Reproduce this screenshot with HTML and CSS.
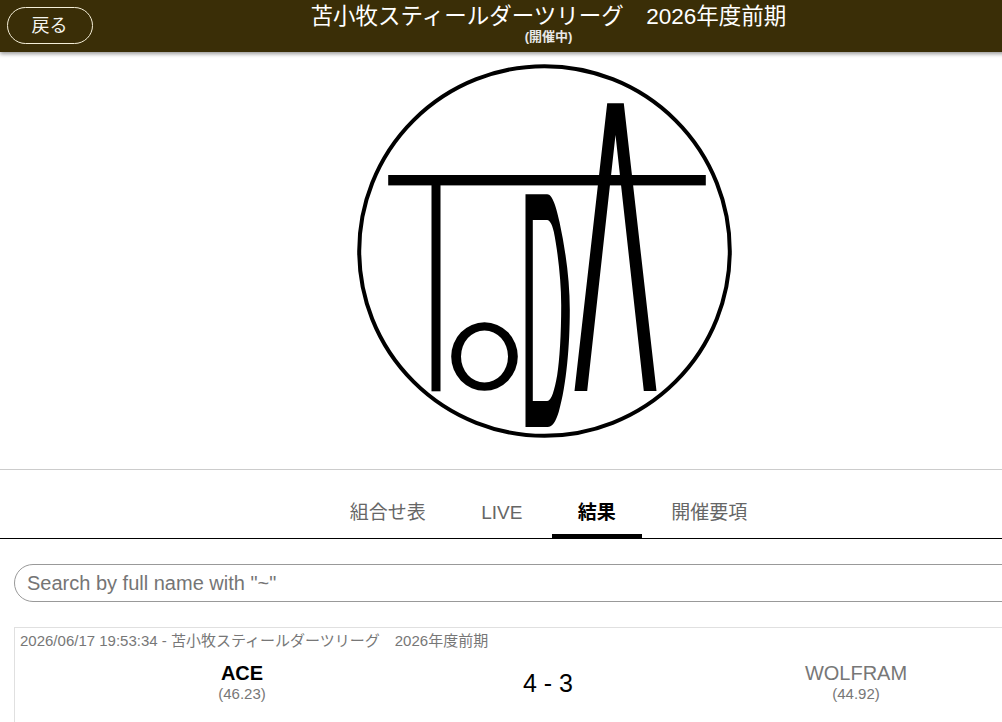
FILE: index.html
```html
<!DOCTYPE html>
<html lang="ja">
<head>
    <meta charset="UTF-8">
    <meta name="viewport" content="width=device-width, initial-scale=1.0">
    <title>苫小牧スティールダーツリーグ 2026年度前期</title>
    <link rel="stylesheet" href="styles.css">
</head>
<body>
    <div class="page">
        <header class="top-bar">
            <a class="back-btn">戻る</a>
            <div class="top-title">
                <div class="league-name">苫小牧スティールダーツリーグ　2026年度前期</div>
                <div class="league-state">(開催中)</div>
            </div>
        </header>

        <div class="logo-area">
            <svg class="logo" viewBox="338.5 52 420 417" width="420" height="417" role="img" aria-label="TODA">
                <ellipse cx="544" cy="251" rx="185.3" ry="184.8" fill="none" stroke="#000" stroke-width="4"/>
                <rect x="387.7" y="175" width="317.6" height="10.4"/>
                <rect x="431" y="185" width="9" height="206.3"/>
                <path fill-rule="evenodd" d="M450.7 356.5a33.3 34.2 0 1 0 66.6 0a33.3 34.2 0 1 0-66.6 0ZM460.5 356.5a23.5 26 0 1 1 47 0a23.5 26 0 1 1-47 0Z"/>
                <path fill-rule="evenodd" d="M525 194.3H546.7C552 194.3 556 208 559 222C565 250 569.3 280 569.3 310C569.3 345 566 385 558.3 411.7C555.5 421 552 427 547 427H525ZM532.3 220V401H546.7C551 401 554 390 556.7 375C559 360 560.7 335 560.7 305C560.7 280 557 250 553.3 231.7C551.5 224 549 220 546.7 220Z"/>
                <path fill-rule="evenodd" d="M606.7 103.3H623.3L656 391H643.3L615 135L586.7 391H574Z"/>
            </svg>
        </div>

        <nav class="tabs">
            <a class="tab">組合せ表</a>
            <a class="tab">LIVE</a>
            <a class="tab active">結果</a>
            <a class="tab">開催要項</a>
        </nav>

        <div class="search-wrap">
            <input class="search-input" type="text" placeholder="Search by full name with &quot;~&quot;">
        </div>

        <div class="match-card">
            <div class="match-date">2026/06/17 19:53:34 - 苫小牧スティールダーツリーグ　2026年度前期</div>
            <div class="match-row">
                <div class="team winner">
                    <div class="team-name">ACE</div>
                    <div class="team-avg">(46.23)</div>
                </div>
                <div class="score">4 - 3</div>
                <div class="team">
                    <div class="team-name">WOLFRAM</div>
                    <div class="team-avg">(44.92)</div>
                </div>
            </div>
        </div>
    </div>
</body>
</html>
```

FILE: styles.css
```css
html, body {
    margin: 0;
    padding: 0;
    height: 722px;
    overflow: hidden;
    background-color: white;
}
body {
    font-family: 'Liberation Sans', 'Noto Sans CJK JP', sans-serif;
    color: #000;
}
.page {
    width: 1097px;
}
.top-bar {
    display: grid;
    grid-template-columns: 100px 1fr 100px;
    height: 52px;
    background-color: #3a2e07;
    box-shadow: 0 2px 4px rgba(0, 0, 0, 0.4);
    position: relative;
}
.back-btn {
    box-sizing: border-box;
    width: 86px;
    height: 37px;
    margin: 7px 0 0 7px;
    padding-right: 1px;
    border: 1px solid #f5efd8;
    border-radius: 19px;
    color: #f5f5f0;
    font-size: 18px;
    line-height: 37px;
    text-align: center;
}
.top-title {
    grid-column: 2;
    color: white;
    text-align: center;
    white-space: nowrap;
}
.league-name {
    font-size: 22.5px;
    line-height: 26px;
    margin-top: 4px;
}
.league-state {
    font-size: 13px;
    font-weight: bold;
    line-height: 14px;
    color: #e8e8e8;
}
.logo-area {
    height: 417px;
    display: flex;
    justify-content: center;
    border-bottom: 1px solid #ccc;
}
.logo {
    display: block;
}
.tabs {
    display: flex;
    justify-content: center;
    gap: 3.5px;
    height: 68px;
    border-bottom: 1px solid #000;
}
.tab {
    box-sizing: border-box;
    height: 68px;
    padding: 30px 26px 0;
    font-size: 19px;
    line-height: 26px;
    color: #666;
}
.tab.active {
    color: #000;
    font-weight: bold;
    border-bottom: 4px solid #000;
}
.search-wrap {
    padding: 25px 14px 0;
}
.search-input {
    display: block;
    box-sizing: border-box;
    width: 100%;
    height: 38px;
    padding: 0 12px;
    border: 1px solid #999;
    border-radius: 19px;
    font-family: inherit;
    font-size: 20px;
    outline: none;
}
.search-input::placeholder {
    color: #757575;
}
.match-card {
    margin: 25px 11px 0 14px;
    padding: 2px 5px 24px;
    border: 1px solid #e0e0e0;
}
.match-date {
    font-size: 15px;
    line-height: 21px;
    color: #777;
}
.match-row {
    display: grid;
    grid-template-columns: 444px 168px 1fr;
    align-items: center;
    margin-top: 10px;
}
.team {
    text-align: center;
    color: #777;
}
.team.winner {
    color: #000;
    font-weight: bold;
}
.team-name {
    font-size: 20px;
    line-height: 24px;
}
.team-avg {
    font-size: 15px;
    line-height: 18px;
    color: #777;
    font-weight: normal;
}
.score {
    font-size: 25px;
    padding-top: 2px;
    text-align: center;
}
```
